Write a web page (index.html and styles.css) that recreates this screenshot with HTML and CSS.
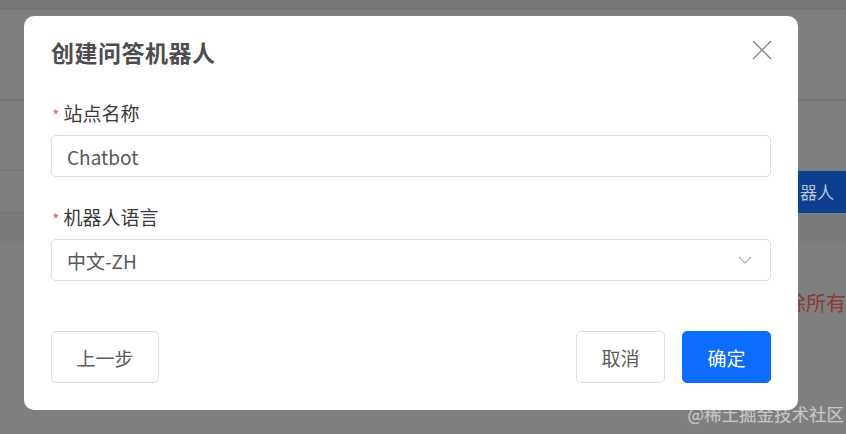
FILE: index.html
```html
<!DOCTYPE html>
<html lang="zh">
<head>
<meta charset="utf-8">
<title>创建问答机器人</title>
<link rel="stylesheet" href="styles.css">
</head>
<body>
<div class="page">
  <div class="strip-top"></div>
  <div class="row row-a"></div>
  <div class="row row-b"></div>
  <div class="row row-c"><span class="bg-btn">器人</span></div>
  <div class="row row-d"></div>
  <div class="row row-e"><span class="bg-red">除所有</span></div>
  <div class="row row-f"><span class="watermark">@稀土掘金技术社区</span></div>
</div>

<div class="modal">
  <div class="modal-header">
    <h2 class="modal-title">创建问答机器人</h2>
    <button class="close" aria-label="关闭">
      <svg width="20" height="20" viewBox="0 0 20 20"><path d="M1 1 L19 19 M19 1 L1 19" stroke="#8c8c8c" stroke-width="1.5" fill="none"/></svg>
    </button>
  </div>
  <div class="form">
    <div class="field">
      <label class="label"><span class="req">*</span>站点名称</label>
      <div class="input">Chatbot</div>
    </div>
    <div class="field">
      <label class="label"><span class="req">*</span>机器人语言</label>
      <div class="input select">
        <span>中文-ZH</span>
        <svg class="chev" width="14" height="8" viewBox="0 0 14 8"><path d="M1 1 L7 7 L13 1" stroke="#b0b0b0" stroke-width="1.2" fill="none"/></svg>
      </div>
    </div>
  </div>
  <div class="footer">
    <button class="btn btn-prev">上一步</button>
    <div class="footer-right">
      <button class="btn btn-cancel">取消</button>
      <button class="btn btn-primary">确定</button>
    </div>
  </div>
</div>
</body>
</html>
```
FILE: styles.css
```css
* { box-sizing: border-box; }
html, body { margin: 0; padding: 0; }
body {
  width: 846px;
  height: 434px;
  overflow: hidden;
  font-family: "Noto Sans CJK SC", "Noto Sans", sans-serif;
  background: #7e7e7e;
}
.page {
  width: 846px;
  height: 434px;
  display: flex;
  flex-direction: column;
  background: #7f7f7f;
}
.strip-top { height: 10px; background: #777777; }
.row { display: flex; justify-content: flex-end; align-items: center; }
.row-a { height: 91px; border-bottom: 2px solid #737373; }
.row-b { height: 70px; border-bottom: 1px solid #767676; }
.row-c { height: 42px; border-bottom: 1px solid #747474; }
.row-d { height: 30px; background: #7b7b7b; }
.row-e { height: 100px; align-items: flex-start; padding-top: 48px; }
.row-f { flex: 1; align-items: flex-end; }
.bg-btn {
  width: 48px;
  height: 42px;
  background: #0d3f8e;
  color: #bcc6d6;
  font-size: 17px;
  line-height: 42px;
  padding-left: 2px;
  white-space: nowrap;
}
.bg-red {
  color: #8c3b3b;
  font-size: 20px;
  line-height: 24px;
  white-space: nowrap;
}
.watermark {
  color: #c6c6c6;
  font-size: 17.5px;
  line-height: 22px;
  margin: 0 2px 9px 0;
  white-space: nowrap;
  text-shadow: 0 0 1px #9a9a9a;
}

.modal {
  position: fixed;
  left: 24px;
  top: 16px;
  width: 774px;
  height: 394px;
  background: #fff;
  border-radius: 10px;
  padding: 22px 27px 27px;
  display: flex;
  flex-direction: column;
}
.modal-header {
  display: flex;
  justify-content: space-between;
  align-items: center;
  height: 28px;
}
.modal-title {
  margin: 0;
  font-size: 23px;
  font-weight: 700;
  color: #4d4d4d;
  line-height: 28px;
  letter-spacing: 0.5px;
}
.close {
  border: 0;
  background: none;
  padding: 0;
  width: 20px;
  height: 20px;
  margin-right: -1px;
  margin-top: -4px;
  cursor: pointer;
}
.close svg { display: block; }
.form { display: flex; flex-direction: column; gap: 28px; margin-top: 35px; }
.field { display: flex; flex-direction: column; gap: 10px; }
.label {
  height: 24px;
  font-size: 19px;
  line-height: 24px;
  color: #3a3a3a;
  display: flex;
  align-items: center;
}
.req { color: #e06a6a; font-size: 16px; margin-right: 4px; margin-top: 3px; margin-left: 1px; }
.input {
  height: 42px;
  border: 1px solid #dcdcdc;
  border-radius: 5px;
  padding: 0 15px;
  display: flex;
  align-items: center;
  font-size: 19px;
  color: #595959;
}
.select { justify-content: space-between; }
.chev { margin-right: 3px; }
.footer {
  margin-top: auto;
  display: flex;
  justify-content: space-between;
}
.footer-right { display: flex; gap: 17px; }
.btn {
  height: 52px;
  border-radius: 5px;
  font-family: inherit;
  font-size: 19px;
  border: 1px solid #dedede;
  background: #fff;
  color: #5c5c5c;
  cursor: pointer;
}
.btn-prev { width: 108px; }
.btn-cancel { width: 89px; }
.btn-primary { width: 89px; background: #0b6cfd; border-color: #0b6cfd; color: #fff; }
```
